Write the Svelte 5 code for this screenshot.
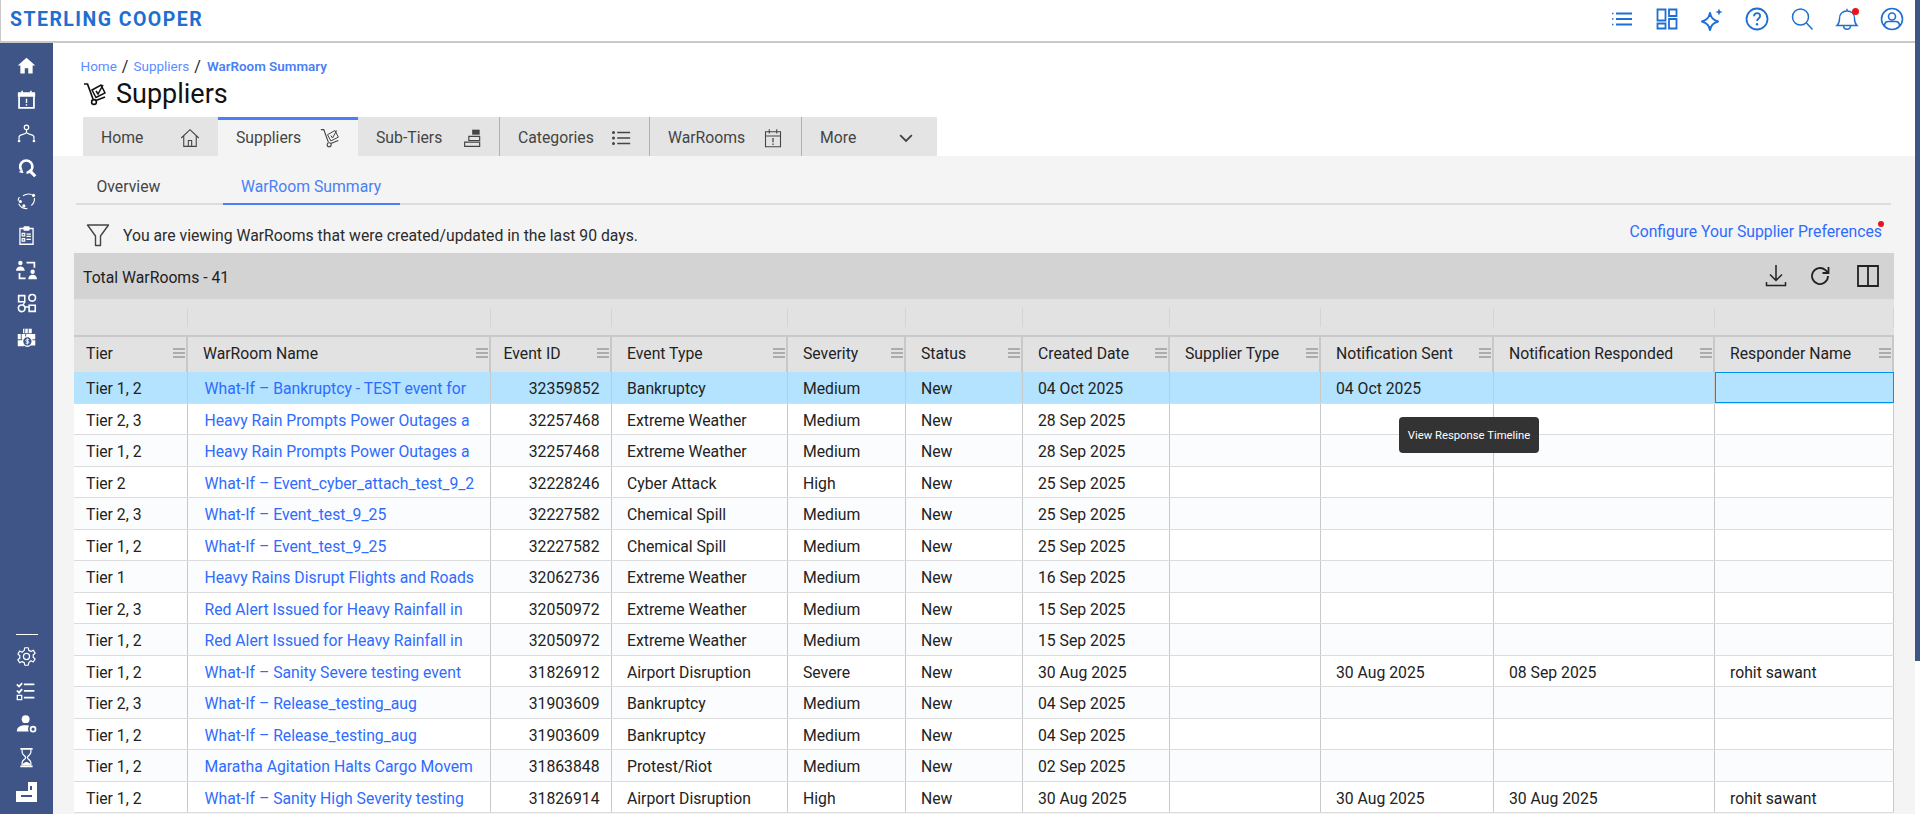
<script>
  const cols = [
    { t: 'Tier', w: 114 },
    { t: 'WarRoom Name', w: 303 },
    { t: 'Event ID', w: 121, num: true },
    { t: 'Event Type', w: 176 },
    { t: 'Severity', w: 118 },
    { t: 'Status', w: 117 },
    { t: 'Created Date', w: 147 },
    { t: 'Supplier Type', w: 151 },
    { t: 'Notification Sent', w: 173 },
    { t: 'Notification Responded', w: 221 },
    { t: 'Responder Name', w: 179 }
  ];
  const rows = [
    ['Tier 1, 2','What-If – Bankruptcy - TEST event for','32359852','Bankruptcy','Medium','New','04 Oct 2025','','04 Oct 2025','',''],
    ['Tier 2, 3','Heavy Rain Prompts Power Outages a','32257468','Extreme Weather','Medium','New','28 Sep 2025','','','',''],
    ['Tier 1, 2','Heavy Rain Prompts Power Outages a','32257468','Extreme Weather','Medium','New','28 Sep 2025','','','',''],
    ['Tier 2','What-If – Event_cyber_attach_test_9_2','32228246','Cyber Attack','High','New','25 Sep 2025','','','',''],
    ['Tier 2, 3','What-If – Event_test_9_25','32227582','Chemical Spill','Medium','New','25 Sep 2025','','','',''],
    ['Tier 1, 2','What-If – Event_test_9_25','32227582','Chemical Spill','Medium','New','25 Sep 2025','','','',''],
    ['Tier 1','Heavy Rains Disrupt Flights and Roads','32062736','Extreme Weather','Medium','New','16 Sep 2025','','','',''],
    ['Tier 2, 3','Red Alert Issued for Heavy Rainfall in','32050972','Extreme Weather','Medium','New','15 Sep 2025','','','',''],
    ['Tier 1, 2','Red Alert Issued for Heavy Rainfall in','32050972','Extreme Weather','Medium','New','15 Sep 2025','','','',''],
    ['Tier 1, 2','What-If – Sanity Severe testing event','31826912','Airport Disruption','Severe','New','30 Aug 2025','','30 Aug 2025','08 Sep 2025','rohit sawant'],
    ['Tier 2, 3','What-If – Release_testing_aug','31903609','Bankruptcy','Medium','New','04 Sep 2025','','','',''],
    ['Tier 1, 2','What-If – Release_testing_aug','31903609','Bankruptcy','Medium','New','04 Sep 2025','','','',''],
    ['Tier 1, 2','Maratha Agitation Halts Cargo Movem','31863848','Protest/Riot','Medium','New','02 Sep 2025','','','',''],
    ['Tier 1, 2','What-If – Sanity High Severity testing','31826914','Airport Disruption','High','New','30 Aug 2025','','30 Aug 2025','30 Aug 2025','rohit sawant']
  ];
</script>

<div class="page">
  <header class="topbar">
    <div class="logo">STERLING COOPER</div>
    <div class="topicons">
      <svg viewBox="0 0 24 24" class="ti"><path d="M2 6.500h2M2 12h2M2 17.500h2" stroke-width="1.500" stroke-dasharray="1.500 .5"/><path d="M6 6.500h16M6 12h16M6 17.500h16" stroke-width="2.200"/></svg>
      <svg viewBox="0 0 24 24" class="ti"><path d="M2.500 2.500h8v11h-8zM14 2.500h7.500v6.500H14zM14 12h7.500v9.500H14zM2.500 16.500h8v5h-8z" stroke-width="1.800"/></svg>
      <svg viewBox="0 0 24 24" class="ti"><path d="M10 6c1 5 3 7 8 8.500-5 1.500-7 3.500-8 8.500-1-5-3-7-8-8.500C7 13 9 11 10 6z" stroke-width="2" stroke-linejoin="round"/><path d="M19 1.500l1 2.500 2.500 1-2.500 1-1 2.500-1-2.500-2.500-1 2.500-1z" fill="#1f6fd0" stroke="none"/></svg>
      <svg viewBox="0 0 24 24" class="ti"><circle cx="12" cy="12" r="10.500" stroke-width="1.800"/><path d="M9 9.300c0-2 1.400-3.100 3.100-3.100s3 1.100 3 2.800c0 2.500-3 2.500-3 5" stroke-width="1.800"/><circle cx="12" cy="17.300" r="1.200" fill="#1f6fd0" stroke="none"/></svg>
      <svg viewBox="0 0 24 24" class="ti"><circle cx="10.500" cy="10" r="8" stroke-width="1.500"/><path d="M16.500 16l6 6.500" stroke-width="1.500"/></svg>
      <span class="bell">
        <svg viewBox="0 0 24 24" class="ti"><path d="M2 18.500c2-1.800 2.500-3 2.500-7 0-4.500 3-7.500 7.500-7.500s7.500 3 7.500 7.500c0 4 .5 5.200 2.500 7zM12 1.800V4M8.500 18.500c0 5 7 5 7 0" stroke-width="1.400"/></svg>
        <i class="reddot"></i>
      </span>
      <svg viewBox="0 0 24 24" class="ti"><circle cx="12" cy="12" r="10.500" stroke-width="1.600"/><circle cx="12" cy="9.500" r="3.500" stroke-width="1.600"/><path d="M4.500 19c0-3.500 2-4.500 4-4.500h7c2 0 4 1 4 4.500" stroke-width="1.600"/></svg>
    </div>
  </header>

  <div class="body">
    <nav class="side">
      <div class="sgroup">
        <svg viewBox="0 0 24 24" class="si"><path d="M12 3L2 12h3v9h5v-6h4v6h5v-9h3z" fill="#fff" stroke="none"/></svg>
        <svg viewBox="0 0 24 24" class="si"><path d="M3.500 5h17v16.500h-17z" fill="none" stroke-width="2"/><path d="M3 5h18v3H3zM7 2v3M17 2v3" stroke-width="1.800" fill="#fff"/><path d="M12 11v5M12 17.500v1.500" stroke-width="1.600"/></svg>
        <svg viewBox="0 0 24 24" class="si"><circle cx="12" cy="5" r="2.500" stroke-width="1.400"/><path d="M12 8v3M3.500 19v-3c0-3 5-2 8.500-5 3.500 3 8.500 2 8.500 5v3" stroke-width="1.400"/><circle cx="3.500" cy="20.500" r="1.500" fill="#fff" stroke="none"/><circle cx="20.500" cy="20.500" r="1.500" fill="#fff" stroke="none"/></svg>
        <svg viewBox="0 0 24 24" class="si"><path d="M6 15a7 7 0 1 1 6 3" stroke-width="3"/><path d="M15 15l7 7" stroke-width="3.600"/><path d="M4 17l3-2 1 3z" fill="#fff" stroke-width="1"/></svg>
        <svg viewBox="0 0 24 24" class="si"><path d="M8 5.500C11 3.500 15 3 18 4M21 8c.5 3.500-1 6.500-3.500 8.500M13 20c-4 .5-8-2-10-5.500M2.500 11C2.500 9.500 3 8 4 7" stroke-width="1.300"/><circle cx="20" cy="5" r="1.800" fill="#fff" stroke="none"/><circle cx="5" cy="12" r="1.800" fill="#fff" stroke="none"/><circle cx="9" cy="17" r="1.800" fill="#fff" stroke="none"/></svg>
        <svg viewBox="0 0 24 24" class="si"><path d="M4.500 4h15v18h-15z" stroke-width="1.500"/><path d="M9 2h6v4H9z" fill="#fff" stroke-width="1"/><path d="M7 9.500h3v3H7zM7 15.500h3v3H7zM12 10.500h5M12 13h5M12 16.500h5" stroke-width="1.300"/></svg>
        <svg viewBox="0 0 24 24" class="si"><circle cx="5" cy="4.500" r="2.500" fill="#fff" stroke="none"/><path d="M0 13.500c0-3.500 2.500-5 5-5s5 1.500 5 5z" fill="#fff" stroke="none"/><circle cx="19" cy="14.500" r="2.500" fill="#fff" stroke="none"/><path d="M14 23c0-3.500 2.500-5 5-5s5 1.500 5 5z" fill="#fff" stroke="none"/><path d="M12 4h9v6M4 16v6h7" stroke-width="2"/></svg>
        <svg viewBox="0 0 24 24" class="si"><path d="M3 3h7v7H3zM15 14h7v7h-7z" stroke-width="1.800"/><circle cx="18.500" cy="5.500" r="3.800" stroke-width="1.800"/><circle cx="6.500" cy="17.500" r="3.800" stroke-width="1.800"/><path d="M10 10l-2 4M15 16h-5" stroke-width="1.500"/></svg>
        <svg viewBox="0 0 24 24" class="si"><path d="M8 2h10v5H8zM2 8h20v6H2z" fill="#fff" stroke="none"/><path d="M10 2v5M14 2v5M6 8v6M11 8v6" stroke="#3f5587" stroke-width="1"/><path d="M2 15h7v7H2zM17 15h5v6h-5z" fill="#fff" stroke="none"/><circle cx="13" cy="16.500" r="5.500" fill="#3f5587" stroke-width="1.500"/><path d="M15 14.500h-3c-1 0-1 2 0 2h2c1 0 1 2 0 2h-3M13 13v7" stroke-width="1"/></svg>
      </div>
      <div class="sgroup bottom">
        <div class="rule"></div>
        <svg viewBox="0 0 24 24" class="si"><circle cx="12" cy="12" r="3.500" stroke-width="1.400"/><path d="M10 2h4l.6 3 2.500 1.200 2.700-1.400 2 3.400-2.200 2c.2 1 .2 1.600 0 2.600l2.200 2-2 3.400-2.700-1.400L14.600 19l-.6 3h-4l-.6-3-2.500-1.200-2.700 1.400-2-3.400 2.200-2c-.2-1-.2-1.600 0-2.600l-2.200-2 2-3.400 2.700 1.400L9.400 5z" stroke-width="1.400" stroke-linejoin="round"/></svg>
        <svg viewBox="0 0 24 24" class="si"><path d="M1 5l2.500 2.500L7 3.500M1 12l2.500 2.500L7 10.500M9 5h12M9 12.500h12M9 20h12" stroke-width="2"/><path d="M1.500 17.500h5v5h-5z" stroke-width="1.500"/></svg>
        <svg viewBox="0 0 24 24" class="si"><circle cx="11" cy="7" r="4.500" fill="#fff" stroke="none"/><path d="M1 21c0-5 4-7 10-7 2 0 3.500.3 4 .7-1.500 2-1.500 4.300-.5 6.300z" fill="#fff" stroke="none"/><circle cx="19.500" cy="18.500" r="2.800" stroke-width="2"/></svg>
        <svg viewBox="0 0 24 24" class="si"><path d="M5 2h14M5 22h14" stroke-width="2"/><path d="M7 3v3c0 3 4 4 4 6s-4 3-4 6v3M17 3v3c0 3-4 4-4 6s4 3 4 6v3" stroke-width="1.400"/><path d="M7 21c1-3 4-4 5-4s4 1 5 4z" fill="#fff" stroke="none"/></svg>
        <svg viewBox="0 0 24 24" class="si big"><path d="M13 2h9v20H1v-11h12zM6 15v2h11v-2zM17 6h-2v4h2z" fill="#fff" fill-rule="evenodd" stroke="none"/></svg>
      </div>
    </nav>

    <main class="main">
      <section class="head">
        <div class="crumbs"><span>Home</span><b>/</b><span>Suppliers</span><b>/</b><strong>WarRoom Summary</strong></div>
        <div class="title">
          <svg viewBox="0 0 24 24" class="dolly"><path d="M1 2h3.500l5.500 15" stroke-width="1.700"/><circle cx="11" cy="20" r="2.400" stroke-width="1.600"/><path d="M13 18.500l9-3.500" stroke-width="1.600"/><path d="M9 8l9-5 4 8-9 4.500zM13 9l2 3 5-9" stroke-width="1.500"/></svg>
          <h1>Suppliers</h1>
        </div>
        <div class="tabs">
          <div class="tab w-home"><span>Home</span><svg viewBox="0 0 24 24" class="tabi"><path d="M1.500 12L12 2l10.500 10M4.500 9.500V22h15V9.500M10 22v-7h4v7" stroke-width="1.300"/></svg></div>
          <div class="tab active w-sup"><span>Suppliers</span><svg viewBox="0 0 24 24" class="tabi"><path d="M1 2h3.500l5.500 15" stroke-width="1.400"/><circle cx="11" cy="20" r="2.400" stroke-width="1.300"/><path d="M13 18.500l9-3.500" stroke-width="1.300"/><path d="M9 8l9-5 4 8-9 4.500zM13 9l2 3 5-9" stroke-width="1.200"/></svg></div>
          <div class="tab w-sub"><span>Sub-Tiers</span><svg viewBox="0 0 24 24" class="tabi"><path d="M11 2h9v6h-9z" fill="#444" stroke="none"/><path d="M7 10h13v5H7zM2 17h18v5H2z" stroke-width="1.400"/></svg></div>
          <div class="tab sep w-cat"><span>Categories</span><svg viewBox="0 0 24 24" class="tabi"><circle cx="3" cy="5.500" r="1.800" fill="#444" stroke="none"/><circle cx="3" cy="12" r="1.800" fill="#444" stroke="none"/><circle cx="3" cy="18.500" r="1.800" fill="#444" stroke="none"/><path d="M7.500 5.500H23M7.500 12H23M7.500 18.500H23" stroke-width="1.800"/></svg></div>
          <div class="tab sep w-war"><span>WarRooms</span><svg viewBox="0 0 24 24" class="tabi"><path d="M3 4.500h18v18H3zM3 9.500h18M7.500 1.500v5M16.500 1.500v5" stroke-width="1.300"/><path d="M12 12v5M12 18.500v1.800" stroke-width="1.500"/></svg></div>
          <div class="tab sep w-more"><span>More</span><svg viewBox="0 0 24 24" class="tabi"><path d="M5 8.500l7 7 7-7" stroke-width="2.200"/></svg></div>
        </div>
      </section>

      <section class="panel">
        <div class="subtabs">
          <div class="st">Overview</div>
          <div class="st on">WarRoom Summary</div>
        </div>
        <div class="notice">
          <div class="nleft">
            <svg viewBox="0 0 24 24" class="funnel"><path d="M1.500 2h21L14.500 13v9.500h-5V13z" stroke-width="1.400" stroke-linejoin="round"/></svg>
            <span>You are viewing WarRooms that were created/updated in the last 90 days.</span>
          </div>
          <a class="cfg">Configure Your Supplier Preferences<i class="reddot small"></i></a>
        </div>

        <div class="grid">
          <div class="gbar">
            <span>Total WarRooms - 41</span>
            <div class="gicons">
              <svg viewBox="0 0 24 24" class="gi"><path d="M12 1v15M6 10.500l6 6 6-6M2.500 18v3.500h19V18" stroke-width="1.500"/></svg>
              <svg viewBox="0 0 24 24" class="gi"><path d="M20 12a8 8 0 1 1-2.500-5.800L20 8.500" stroke-width="1.800"/><path d="M20.500 3v6h-6" stroke-width="1.800"/></svg>
              <svg viewBox="0 0 24 24" class="gi last"><path d="M2 2h20v20H2zM12 2v20" stroke-width="1.800"/></svg>
            </div>
          </div>
          <div class="frow">
            {#each cols as c}<div class="fcell" style="width:{c.w}px"></div>{/each}
          </div>
          <div class="hrow">
            {#each cols as c, j}
              <div class="hcell" class:first={j === 0} class:idc={j === 2} style="width:{c.w}px">
                <span>{c.t}</span>
                <svg viewBox="0 0 12 12" class="menu"><path d="M0 2h12M0 6h12M0 10h12"/></svg>
              </div>
            {/each}
          </div>
          {#each rows as r, i}
            <div class="row" class:sel={i === 0} class:alt={i % 2 === 0 && i > 0}>
              {#each r as v, j}
                <div class="cell" class:first={j === 0} class:link={j === 1} class:num={j === 2} class:focus={i === 0 && j === 10} style="width:{cols[j].w}px">{v}</div>
              {/each}
            </div>
          {/each}
          <div class="tip">View Response Timeline</div>
        </div>
      </section>
    </main>
  </div>
  <div class="thumb"></div>
</div>

<style>
  :global(body) { margin: 0; background: #fff; }
  .page { position: relative; height: 814px; width: 1920px; overflow: hidden; font-family: Roboto, "Liberation Sans", sans-serif; color: #212121; }
  .thumb { position: absolute; right: 0; top: 0; width: 5px; height: 661px; background: #3f5587; }
  .topbar { height: 43px; box-sizing: border-box; width: 1915px; border: 1px solid #c9c9c9; border-width: 0 0 2px 1px; display: flex; align-items: center; justify-content: space-between; padding: 0 11.5px 3px 9px; background: #fff; }
  .logo { font-size: 19.5px; font-weight: 700; letter-spacing: 1.45px; color: #1f6fd0; }
  .topicons { display: flex; align-items: center; gap: 21px; }
  .ti { width: 24px; height: 24px; fill: none; stroke: #1f6fd0; display: block; }
  .bell { position: relative; display: block; }
  .reddot { position: absolute; right: 0; top: 1px; width: 7px; height: 7px; border-radius: 50%; background: #e8141c; }
  .body { display: flex; height: 771px; }
  .side { width: 53px; flex: none; background: #3f5587; display: flex; flex-direction: column; justify-content: space-between; align-items: center; padding: 11.5px 0 0; box-sizing: border-box; }
  .sgroup { display: flex; flex-direction: column; align-items: center; gap: 13px; }
  .sgroup.bottom { gap: 12.500px; padding-bottom: 10px; }
  .rule { width: 22px; height: 1px; background: #fff; margin-bottom: -1px; }
  .si { width: 21px; height: 21px; fill: none; stroke: #fff; display: block; }
  .si.big { width: 24px; height: 24px; }
  .main { flex: 1; min-width: 0; display: flex; flex-direction: column; margin-right: 5px; }
  .head { padding: 15px 0 0 30px; height: 113px; box-sizing: border-box; background: #fff; }
  .crumbs { font-size: 13.500px; color: #5b8cff; display: flex; align-items: center; gap: 5px; line-height: 17px; margin-left: -2.500px; }
  .crumbs b { font-weight: 400; color: #222; font-size: 16px; line-height: 14px; }
  .crumbs strong { font-size: 13.400px; font-weight: 600; color: #4a80f5; margin-left: 1px; }
  .title { display: flex; align-items: center; gap: 9px; height: 33px; margin-top: 2px; }
  .dolly { width: 24px; height: 24px; fill: none; stroke: #111; }
  h1 { margin: 0; font-size: 27px; font-weight: 400; color: #111; line-height: 32px; }
  .tabs { display: flex; height: 39px; margin-top: 7px; }
  .tab { box-sizing: border-box; height: 39px; background: #e4e4e4; display: flex; align-items: center; justify-content: space-between; font-size: 15.750px; color: #444; padding: 2px 18px 0; }
  .tab.active { background: #f4f4f4; border-top: 3px solid #4a80f5; padding-top: 0; padding-bottom: 1px; }
  .tab.sep { border-left: 1px solid #b0b0b0; }
  .w-home { width: 135px; }
  .w-sup { width: 140px; }
  .tab.w-sub { width: 141px; padding-right: 16px; }
  .w-cat { width: 150px; }
  .w-war { width: 152px; }
  .tab.w-more { width: 136px; padding-right: 21px; }
  .tabi { width: 20px; height: 20px; fill: none; stroke: #444; display: block; }
  .panel { flex: 1; background: #f4f4f4; padding: 0 21px; min-height: 0; }
  .subtabs { display: flex; border-bottom: 2px solid #dcdcdc; margin-left: 2px; height: 49px; gap: 9px; width: 1815px; box-sizing: border-box; }
  .st { width: 138px; padding-left: 20.500px; font-size: 15.750px; color: #444; height: 49px; box-sizing: border-box; line-height: 61px; }
  .st.on { width: 177px; padding-left: 18px; color: #4a80f5; border-bottom: 2px solid #4a80f5; }
  .notice { display: flex; justify-content: space-between; align-items: center; height: 48px; box-sizing: border-box; padding: 12px 12px 0 12px; font-size: 15.750px; }
  .nleft { display: flex; align-items: center; gap: 13px; color: #2b2b2b; }
  .funnel { width: 24px; height: 24px; fill: none; stroke: #444; }
  .cfg { color: #2f6bff; position: relative; margin-top: -7px; }
  .reddot.small { width: 6px; height: 6px; right: -2px; top: -1px; }
  .grid { position: relative; width: 1820px; }
  .gbar { height: 46px; background: #d3d3d3; display: flex; align-items: center; justify-content: space-between; padding: 2px 14px 0 9px; box-sizing: border-box; font-size: 15.750px; }
  .gicons { display: flex; gap: 20px; align-items: center; margin-top: -2px; }
  .gi { width: 24px; height: 24px; fill: none; stroke: #222; }
  .gi.last { margin-left: 4px; }
  .frow { height: 36px; background: #e2e2e2; display: flex; align-items: center; }
  .fcell { height: 19px; box-sizing: border-box; border-right: 1px solid #d4d4d4; flex: none; }
  .hrow { height: 37px; box-sizing: border-box; background: #e2e2e2; display: flex; border-top: 2px solid #c8c8c8; }
  .hcell { flex: none; box-sizing: border-box; border-right: 2px solid #c8c8c8; display: flex; align-items: center; justify-content: space-between; padding: 0 1.500px 3px 15px; font-size: 15.750px; color: #222; }
  .hcell.first { padding-left: 12px; }
  .hcell.idc { padding-left: 12.500px; }
  .menu { width: 12px; height: 12px; stroke: #777; stroke-width: 1.200; flex: none; }
  .row { display: flex; height: 31.500px; box-sizing: border-box; background: #fff; border-bottom: 1px solid #dcdcdc; }
  .row.alt { background: #fbfcfe; }
  .row.sel { background: #b3e3ff; }
  .cell { flex: none; box-sizing: border-box; border-right: 1px solid #c9c9c9; padding: 0 12px 0 15px; font-size: 15.750px; line-height: 33px; color: #222; white-space: nowrap; overflow: hidden; }
  .cell.first { padding-left: 12px; }
  .cell.link { color: #2f6bff; padding-left: 16.500px; }
  .cell.num { text-align: right; padding-right: 11.500px; }
  .cell.focus { border: 1px solid #0091ea; }
  .tip { position: absolute; left: 1325px; top: 164px; width: 140px; height: 36px; background: #333; color: #fff; border-radius: 4px; font-size: 11.300px; display: flex; align-items: center; justify-content: center; }
</style>
